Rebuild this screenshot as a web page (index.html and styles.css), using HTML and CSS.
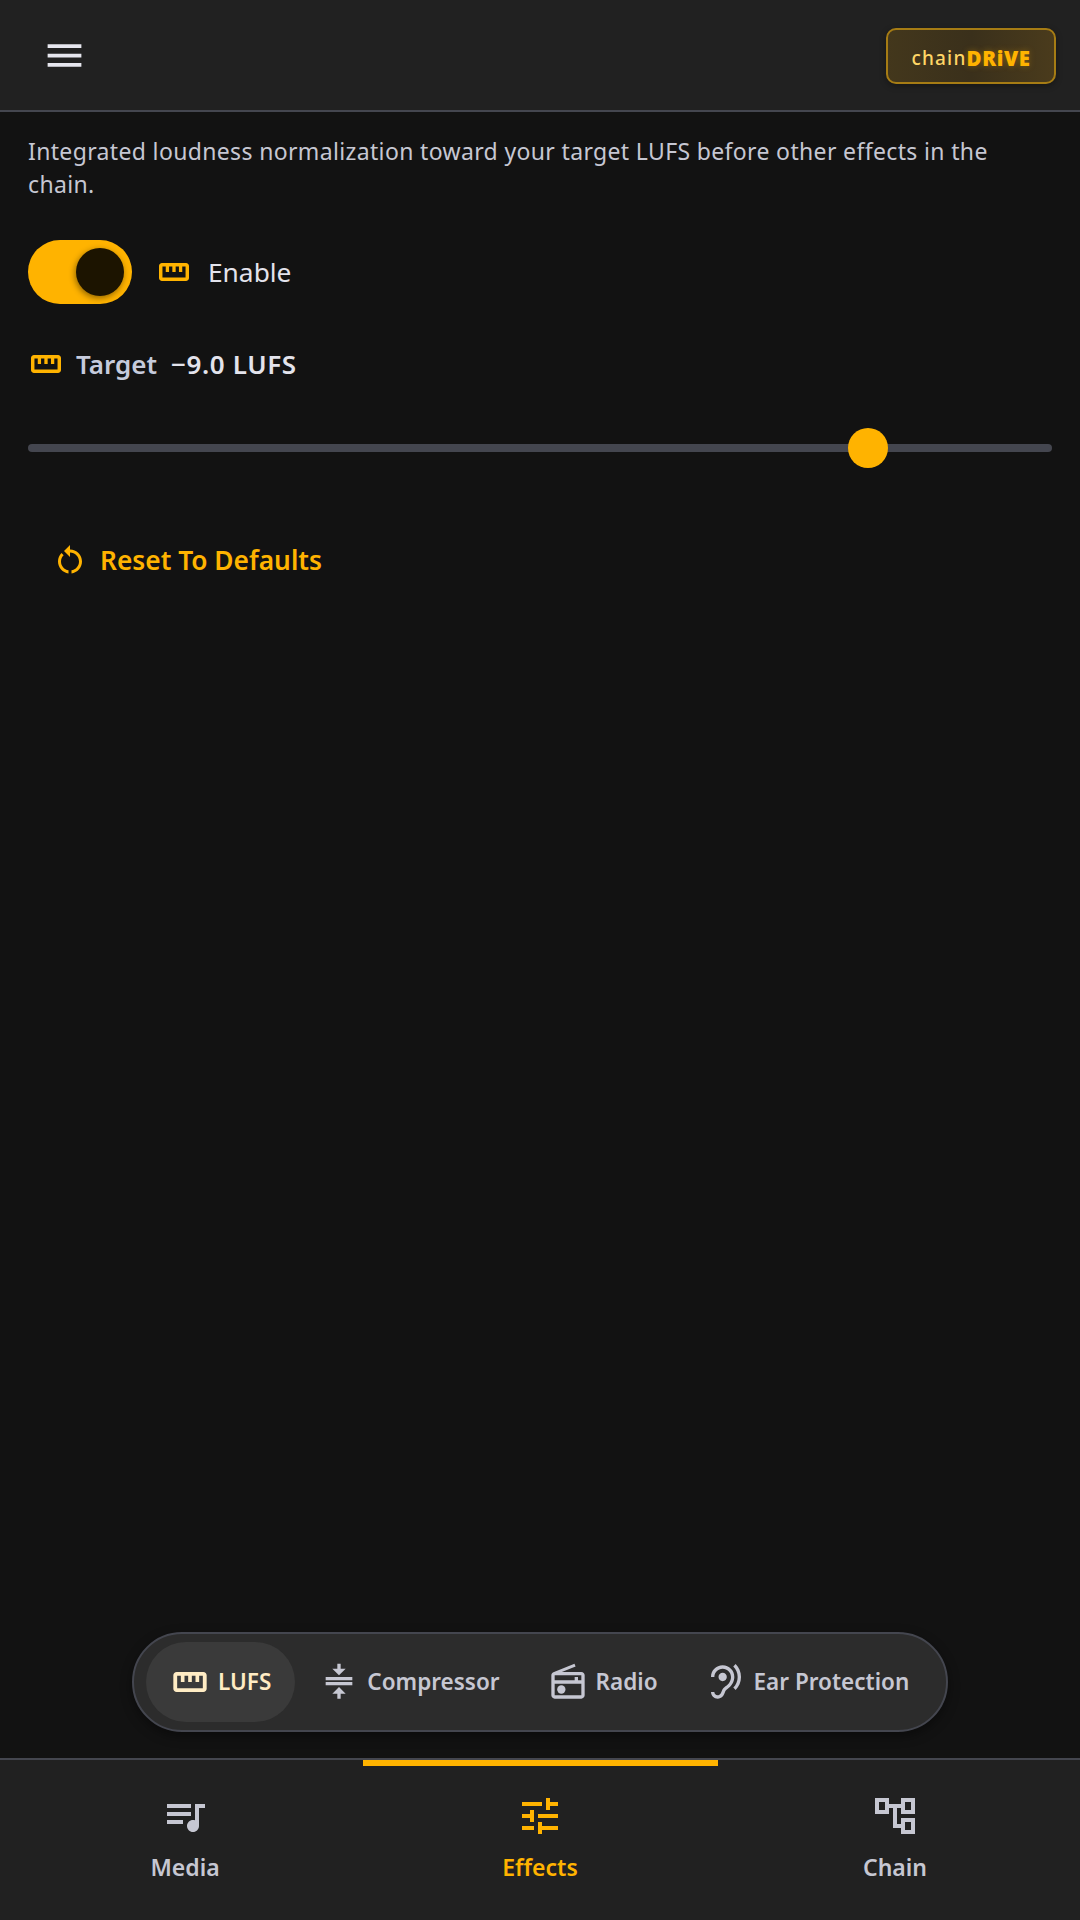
FILE: index.html
```html
<!DOCTYPE html>
<html lang="en">
<head>
<meta charset="utf-8">
<title>chainDRIVE</title>
<link rel="stylesheet" href="styles.css">
</head>
<body>
<svg class="defs" aria-hidden="true">
  <symbol id="ruler" viewBox="0 0 24 24"><path d="M20 6H4c-1.100 0-2 .9-2 2v8c0 1.100.9 2 2 2h16c1.100 0 2-.9 2-2V8c0-1.100-.9-2-2-2zm-.3 9.700H4.300V8.300h2.200V12h2.200V8.300h2.200V12h2.200V8.300h2.200V12h2.200V8.300h2.200v7.400z"/></symbol>
</svg>
<div class="app">
  <header class="topbar">
    <svg class="menu-icon" viewBox="0 0 24 24"><path d="M3 18h18v-2H3v2zm0-5h18v-2H3v2zm0-7v2h18V6H3z"/></svg>
    <div class="logo"><span class="logo-chain">chain</span><span class="logo-drive">DRiVE</span></div>
  </header>
  <main class="content">
    <p class="desc">Integrated loudness normalization toward your target LUFS before other effects in the chain.</p>
    <div class="enable-row">
      <div class="toggle"><div class="toggle-thumb"></div></div>
      <svg class="icon36 amber"><use href="#ruler"/></svg>
      <span class="enable-label">Enable</span>
    </div>
    <div class="target-row">
      <svg class="icon36 amber"><use href="#ruler"/></svg>
      <span class="target-label">Target</span>
      <span class="target-value">−9.0 LUFS</span>
    </div>
    <div class="slider"><div class="slider-thumb"></div></div>
    <div class="reset">
      <svg class="icon36 amber" viewBox="0 0 24 24"><path d="M12 5V2L8 6l4 4V7c3.310 0 6 2.690 6 6 0 2.970-2.170 5.430-5 5.910v2.020c3.950-.49 7-3.850 7-7.930 0-4.420-3.580-8-8-8zm-6 8c0-1.650.67-3.150 1.760-4.240L6.340 7.340C4.900 8.790 4 10.790 4 13c0 4.080 3.050 7.440 7 7.930v-2.020c-2.830-.48-5-2.940-5-5.910z"/></svg>
      <span>Reset To Defaults</span>
    </div>
  </main>
  <div class="subnav-wrap">
    <nav class="subnav">
      <div class="subtab active">
        <svg class="icon40"><use href="#ruler"/></svg>
        <span>LUFS</span>
      </div>
      <div class="subtab">
        <svg class="icon40" viewBox="0 0 24 24"><path d="M8 19h3v3h2v-3h3l-4-4-4 4zm8-15h-3V1h-2v3H8l4 4 4-4zM4 9v2h16V9H4zm0 3h16v2H4v-2z"/></svg>
        <span>Compressor</span>
      </div>
      <div class="subtab">
        <svg class="icon40" viewBox="0 0 24 24"><path d="M20 6H8.300l8.260-3.340L15.880 1 3.240 6.150C2.510 6.430 2 7.170 2 8v12c0 1.100.89 2 2 2h16c1.110 0 2-.89 2-2V8c0-1.110-.89-2-2-2zm0 2v3h-2V9h-2v2H4V8h16zM4 20v-7h16v7H4z"/><circle cx="8" cy="16.500" r="2.500"/></svg>
        <span>Radio</span>
      </div>
      <div class="subtab">
        <svg class="icon40 mirror" viewBox="0 0 24 24"><path d="M17 20c-.29 0-.56-.06-.76-.15-.71-.37-1.210-.88-1.710-2.380-.51-1.560-1.470-2.290-2.390-3-.79-.61-1.610-1.240-2.320-2.530C9.290 10.980 9 9.930 9 9c0-2.800 2.200-5 5-5s5 2.200 5 5h2c0-3.930-3.070-7-7-7S7 5.070 7 9c0 1.260.38 2.650 1.070 3.900.91 1.650 1.980 2.480 2.850 3.150.81.62 1.390 1.070 1.710 2.050.6 1.820 1.370 2.840 2.730 3.550.51.23 1.070.35 1.640.35 2.210 0 4-1.790 4-4h-2c0 1.100-.9 2-2 2zM7.640 2.640L6.220 1.220C4.230 3.210 3 5.960 3 9s1.230 5.790 3.220 7.780l1.410-1.410C6.010 13.740 5 11.490 5 9s1.010-4.740 2.640-6.360zM11.500 9c0 1.380 1.120 2.500 2.500 2.500s2.500-1.120 2.500-2.500-1.120-2.500-2.500-2.500-2.500 1.120-2.500 2.500z"/></svg>
        <span>Ear Protection</span>
      </div>
    </nav>
  </div>
  <footer class="bottomnav">
    <div class="navitem">
      <svg class="icon48" viewBox="0 0 24 24"><path d="M15 6H3v2h12V6zm0 4H3v2h12v-2zM3 16h8v-2H3v2zM17 6v8.180c-.31-.11-.65-.18-1-.18-1.660 0-3 1.340-3 3s1.340 3 3 3 3-1.340 3-3V8h3V6h-5z"/></svg>
      <span>Media</span>
    </div>
    <div class="navitem selected">
      <svg class="icon48" viewBox="0 0 24 24"><path d="M3 17v2h6v-2H3zM3 5v2h10V5H3zm10 16v-2h8v-2h-8v-2h-2v6h2zM7 9v2H3v2h4v2h2V9H7zm14 4v-2H11v2h10zm-6-4h2V7h4V5h-4V3h-2v6z"/></svg>
      <span>Effects</span>
    </div>
    <div class="navitem">
      <svg class="icon48 evenodd" viewBox="0 0 24 24"><path d="M22 11V3h-7v3H9V3H2v8h7V8h2v10h4v3h7v-8h-7v3h-2V8h2v3h7zM7 9H4V5h3v4zM17 15h3v4h-3v-4zM17 5h3v4h-3V5z"/></svg>
      <span>Chain</span>
    </div>
  </footer>
</div>
</body>
</html>
```
FILE: styles.css
```css
* { box-sizing: border-box; }
html, body { margin: 0; height: 100%; }
body {
  background: #121212;
  color: #e3e3ec;
  font-family: "Noto Sans", "Open Sans", sans-serif;
}
.defs { display: none; }
svg { fill: currentColor; flex: none; display: block; }
.evenodd { fill-rule: evenodd; }
.amber { color: #ffb300; }
.icon36 { width: 36px; height: 36px; }
.icon40 { width: 40px; height: 40px; }
.icon48 { width: 48px; height: 48px; }
.mirror { transform: scaleX(-1); }

.app { height: 1920px; display: flex; flex-direction: column; overflow: hidden; }

.topbar {
  height: 112px;
  flex: none;
  background: #212121;
  border-bottom: 2px solid #44464f;
  display: flex;
  align-items: center;
  justify-content: space-between;
  padding: 2px 24px 0 42px;
}
.menu-icon { width: 45px; height: 45px; color: #e6e6ee; margin-top: -2px; }
.logo {
  width: 170px;
  height: 56px;
  border: 2px solid #a67c14;
  border-radius: 10px;
  background: linear-gradient(90deg, #43371c, #3a301b 50%, #4a3b1c);
  display: flex;
  align-items: center;
  justify-content: center;
  box-shadow: 0 2px 6px rgba(0,0,0,.35);
  padding-top: 3px;
  line-height: 24px;
}
.logo-chain { color: #ffd666; letter-spacing: 1.200px; font-size: 19px; font-weight: 500; }
.logo-drive {
  color: #ffb300;
  font-size: 20.500px;
  font-weight: 900;
  letter-spacing: .6px;
  text-shadow: 0 0 6px rgba(255,179,0,.35);
}

.content { flex: 1; padding: 0 28px; }
.desc {
  margin: 23px 0 0;
  font-size: 23px;
  letter-spacing: .35px;
  line-height: 33px;
  color: #c6c7d2;
}
.enable-row {
  margin-top: 39px;
  display: flex;
  align-items: center;
  height: 64px;
}
.toggle {
  width: 104px;
  height: 64px;
  border-radius: 32px;
  background: #ffb300;
  display: flex;
  align-items: center;
  justify-content: flex-end;
  padding-right: 8px;
  margin-right: 24px;
}
.toggle-thumb {
  width: 48px;
  height: 48px;
  border-radius: 50%;
  background: #1c1400;
  box-shadow: -1px 2px 6px rgba(0,0,0,.45);
}
.enable-label { margin-left: 16px; font-size: 26.300px; line-height: 36px; color: #e3e3ec; }
.target-row {
  margin-top: 42px;
  display: flex;
  align-items: center;
  height: 36px;
}
.target-label { margin-left: 12px; font-size: 26px; font-weight: 600; color: #c6cbdc; }
.target-value { margin-left: 14px; font-size: 26px; letter-spacing: .6px; font-weight: 600; color: #e3e3ec; }
.slider {
  margin-top: 62px;
  height: 8px;
  border-radius: 4px;
  background: #44464f;
  display: flex;
  align-items: center;
  padding-left: 820px;
}
.slider-thumb { width: 40px; height: 40px; border-radius: 50%; background: #ffb300; flex: none; }
.reset {
  margin: 90px 0 0 24px;
  display: flex;
  align-items: center;
  gap: 12px;
  height: 36px;
  color: #ffb300;
  font-size: 26.300px;
  font-weight: 600;
}

.subnav-wrap { flex: none; display: flex; justify-content: center; padding-bottom: 26px; }
.subnav {
  width: 816px;
  height: 100px;
  border: 2px solid #44464f;
  border-radius: 50px;
  background: #2c2c2c;
  display: flex;
  align-items: center;
  padding: 0 12px;
  box-shadow: 0 4px 12px rgba(0,0,0,.4);
}
.subtab {
  height: 80px;
  display: flex;
  align-items: center;
  gap: 8px;
  padding: 0 24px;
  border-radius: 40px;
  font-size: 22.500px;
  line-height: 30px;
  font-weight: 600;
  color: #c6c7d2;
  white-space: nowrap;
}
.subtab span { margin-top: -1px; }
.subtab.active { background: #3a3a3a; color: #ffecc4; }

.bottomnav {
  flex: none;
  height: 162px;
  background: #212121;
  border-top: 2px solid #44464f;
  display: flex;
  padding: 0 7.500px;
}
.navitem {
  flex: 1;
  display: flex;
  flex-direction: column;
  align-items: center;
  padding-top: 26px;
  font-size: 23px;
  line-height: 30px;
  font-weight: 600;
  color: #c6c7d2;
  border-top: 6px solid transparent;
}
.navitem span { margin-top: 12px; }
.navitem.selected { color: #ffb300; border-top-color: #ffb300; }
```
